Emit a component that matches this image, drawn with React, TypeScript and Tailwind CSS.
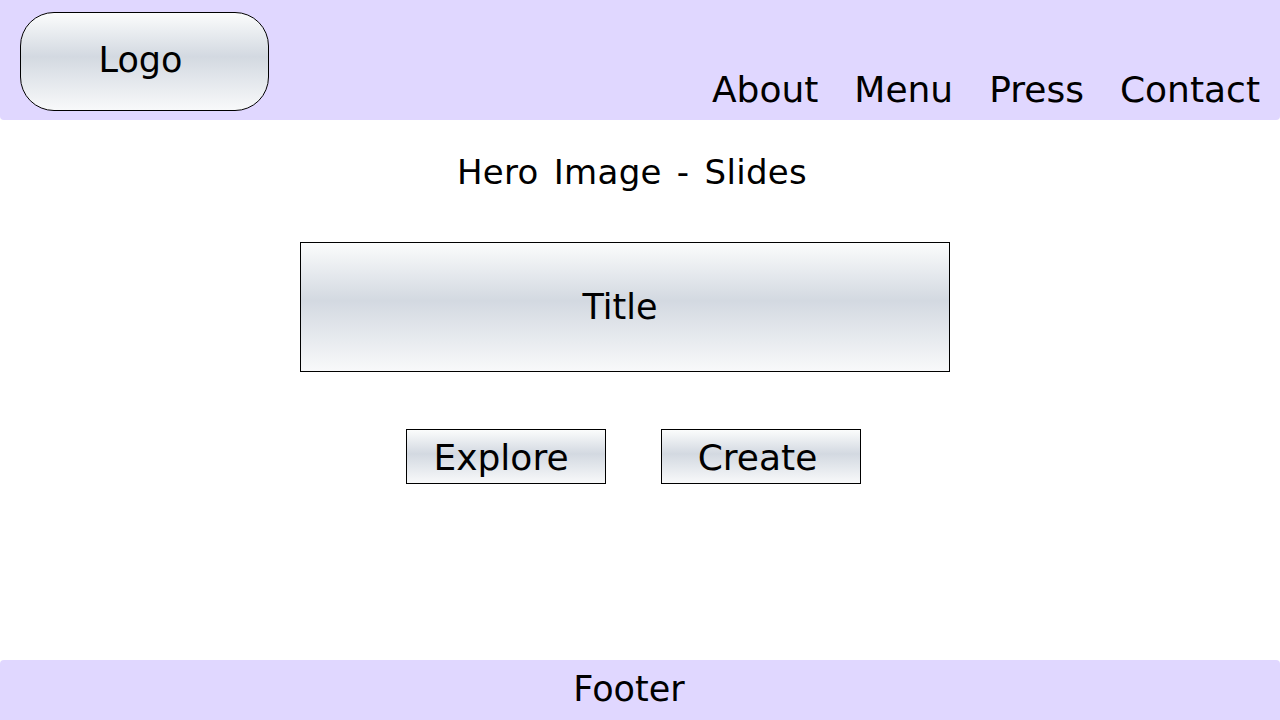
const font = { fontFamily: '"DejaVu Sans", "Liberation Sans", sans-serif' }

const glossy = 'bg-linear-to-b from-[#fbfcfc] via-[#d3d9e1] via-45% to-[#f8f9fa]'

export default function App() {
  return (
    <div className="w-[1280px] h-[720px] flex flex-col bg-white text-black" style={font}>
      <header className="h-[120px] bg-[#e0d7ff] rounded-b-[4px] flex items-start justify-between pl-[20px] pr-[20px]">
        <div className={`mt-[12px] w-[249px] h-[99px] rounded-[34px] border border-black ${glossy} flex items-center justify-center text-[35px] pb-[3px] pr-[8px]`}>
          Logo
        </div>
        <nav className="mt-[66px] flex gap-[36px] text-[36px] leading-[48px]">
          <span>About</span>
          <span>Menu</span>
          <span>Press</span>
          <span>Contact</span>
        </nav>
      </header>

      <main className="flex-1 flex flex-col">
        <h2 className="mt-[30px] h-[44px] leading-[44px] text-[34px] tracking-[0.3px] text-center pr-[16px] [word-spacing:4px]">
          Hero Image - Slides
        </h2>
        <div className={`mt-[48px] ml-[300px] w-[650px] h-[130px] border border-black ${glossy} flex items-center justify-center text-[35px] pr-[10px]`}>
          Title
        </div>
        <div className="mt-[57px] ml-[406px] flex gap-[55px]">
          <button className={`w-[200px] h-[55px] border border-black ${glossy} flex items-center justify-center text-[36px] leading-none pt-[2px] pr-[10px]`}>
            Explore
          </button>
          <button className={`w-[200px] h-[55px] border border-black ${glossy} flex items-center justify-center text-[36px] leading-none pt-[2px] pr-[7px]`}>
            Create
          </button>
        </div>
      </main>

      <footer className="h-[60px] bg-[#e0d7ff] rounded-t-[4px] flex items-center justify-center text-[35px] pr-[22px] pb-[2px]">
        Footer
      </footer>
    </div>
  )
}
